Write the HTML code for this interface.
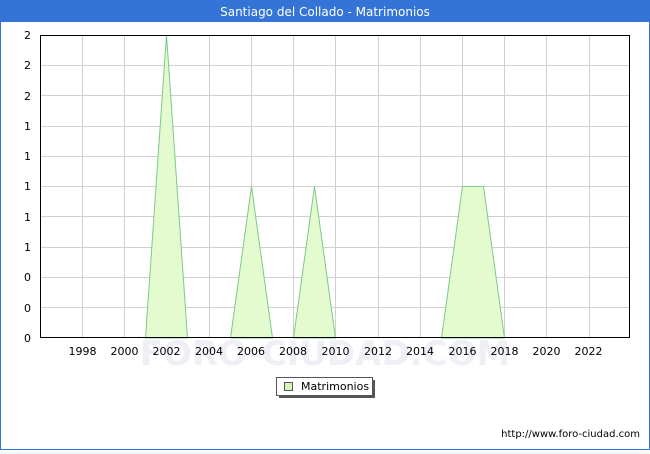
<!DOCTYPE html>
<html><head><style>
body{margin:0;width:650px;height:450px;overflow:hidden;background:#fff;font-family:"DejaVu Sans","Liberation Sans",sans-serif}
</style></head><body>
<svg width="650" height="450" xmlns="http://www.w3.org/2000/svg" font-family="DejaVu Sans, Liberation Sans, sans-serif">
<rect x="0.5" y="0.5" width="649" height="449" fill="#fff" stroke="#3474d6"/>
<rect x="0" y="0" width="650" height="22" fill="#3474d6"/>
<text x="325" y="16" fill="#fff" font-size="12" text-anchor="middle">Santiago del Collado - Matrimonios</text>
<text x="325" y="365" fill="#eef0f6" font-size="34" text-anchor="middle" font-weight="bold">FORO-CIUDAD.COM</text>
<g stroke="#d0d0d0" stroke-width="1">
<line x1="40" x2="630" y1="65.5" y2="65.5"/><line x1="40" x2="630" y1="95.5" y2="95.5"/><line x1="40" x2="630" y1="126.5" y2="126.5"/><line x1="40" x2="630" y1="156.5" y2="156.5"/><line x1="40" x2="630" y1="186.5" y2="186.5"/><line x1="40" x2="630" y1="216.5" y2="216.5"/><line x1="40" x2="630" y1="247.5" y2="247.5"/><line x1="40" x2="630" y1="277.5" y2="277.5"/><line x1="40" x2="630" y1="307.5" y2="307.5"/>
<line x1="82.5" x2="82.5" y1="35" y2="338"/><line x1="124.5" x2="124.5" y1="35" y2="338"/><line x1="166.5" x2="166.5" y1="35" y2="338"/><line x1="209.5" x2="209.5" y1="35" y2="338"/><line x1="251.5" x2="251.5" y1="35" y2="338"/><line x1="293.5" x2="293.5" y1="35" y2="338"/><line x1="335.5" x2="335.5" y1="35" y2="338"/><line x1="378.5" x2="378.5" y1="35" y2="338"/><line x1="420.5" x2="420.5" y1="35" y2="338"/><line x1="462.5" x2="462.5" y1="35" y2="338"/><line x1="504.5" x2="504.5" y1="35" y2="338"/><line x1="546.5" x2="546.5" y1="35" y2="338"/><line x1="589.5" x2="589.5" y1="35" y2="338"/>
</g>
<g fill="#e4fbd0" stroke="#7ec98a" stroke-width="1">
<polygon points="145.5,338 166.5,35 187.5,338"/>
<polygon points="230.5,338 251.5,186.5 272.5,338"/>
<polygon points="293.5,338 314.5,186.5 335.5,338"/>
<polygon points="441.5,338 462.5,186.5 483.5,186.5 504.5,338"/>
</g>
<rect x="40.5" y="35.5" width="589" height="302" fill="none" stroke="#000"/>
<g font-size="11" fill="#000" text-anchor="end">
<text x="31" y="39">2</text><text x="31" y="69">2</text><text x="31" y="100">2</text><text x="31" y="130">1</text><text x="31" y="160">1</text><text x="31" y="190">1</text><text x="31" y="221">1</text><text x="31" y="251">1</text><text x="31" y="281">0</text><text x="31" y="312">0</text><text x="31" y="342">0</text>
</g>
<g font-size="11" fill="#000" text-anchor="middle">
<text x="82.5" y="355">1998</text><text x="124.5" y="355">2000</text><text x="166.5" y="355">2002</text><text x="209" y="355">2004</text><text x="251" y="355">2006</text><text x="293" y="355">2008</text><text x="335.5" y="355">2010</text><text x="378" y="355">2012</text><text x="420" y="355">2014</text><text x="462.5" y="355">2016</text><text x="504.5" y="355">2018</text><text x="546.5" y="355">2020</text><text x="588.5" y="355">2022</text>
</g>
<rect x="279" y="380" width="96" height="18" fill="#555"/>
<rect x="276.5" y="377.5" width="96" height="18" fill="#fff" stroke="#555"/>
<rect x="284.5" y="382.5" width="8" height="8" fill="#d6f7b8" stroke="#555"/>
<text x="301" y="390" font-size="11">Matrimonios</text>
<text x="640" y="437" font-size="10" text-anchor="end">http://www.foro-ciudad.com</text>
</svg>
</body></html>
